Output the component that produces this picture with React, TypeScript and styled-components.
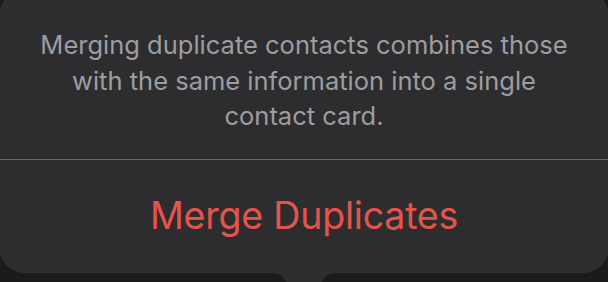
import React from "react";
import styled, { createGlobalStyle } from "styled-components";

const Global = createGlobalStyle`
  html, body { margin: 0; padding: 0; background: #1b1b1d; overflow: hidden; }
  body { width: 608px; height: 282px; font-family: Inter, "Noto Sans", sans-serif; }
`;

const Stage = styled.div`
  width: 608px;
  height: 282px;
  display: flex;
  flex-direction: column;
  overflow: hidden;
`;

const Card = styled.div`
  position: relative;
  margin: -10px -1px 0;
  height: 283px;
  background: #2d2d2f;
  border-radius: 26px;
  display: flex;
  flex-direction: column;
`;

const Message = styled.p`
  margin: 0;
  padding: 37px 34px 24px;
  height: 169px;
  box-sizing: border-box;
  text-align: center;
  color: #9d9da1;
  font-size: 25.5px;
  line-height: 35.5px;
  letter-spacing: 0;
`;

const Divider = styled.div`
  height: 1px;
  background: #68686b;
`;

const Action = styled.button`
  flex: 1;
  border: 0;
  background: transparent;
  color: #e5544b;
  font-family: inherit;
  font-size: 37.5px;
  letter-spacing: -0.2px;
  display: flex;
  align-items: center;
  justify-content: center;
  padding: 0 0 2px;
`;

const Tail = styled.svg`
  position: absolute;
  left: 50%;
  top: 100%;
  transform: translateX(-50%);
`;

export default function App() {
  return (
    <Stage>
      <Global />
      <Card>
        <Message>
          Merging duplicate contacts combines those with the same information into a single contact card.
        </Message>
        <Divider />
        <Action>Merge Duplicates</Action>
        <Tail width="64" height="20" viewBox="0 0 64 20">
          <path d="M0 0 C 8 0 12 4 14 9 L 30 19 Q 32 20 34 19 L 50 9 C 52 4 56 0 64 0 Z" fill="#2d2d2f" />
        </Tail>
      </Card>
    </Stage>
  );
}
